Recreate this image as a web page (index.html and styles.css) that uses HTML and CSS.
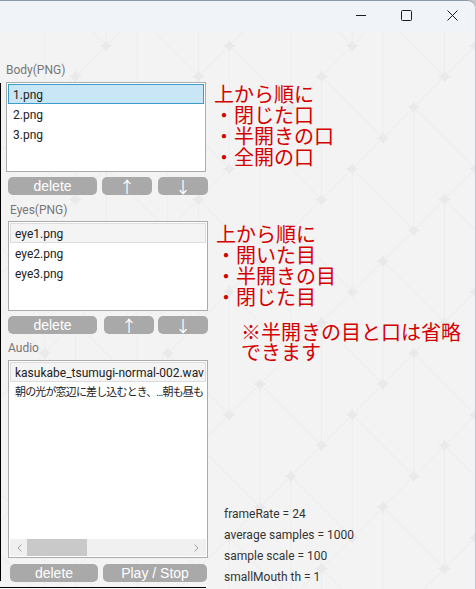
FILE: index.html
```html
<!DOCTYPE html>
<html lang="ja">
<head>
<meta charset="utf-8">
<title>Lip sync tool</title>
<link rel="stylesheet" href="styles.css">
</head>
<body>
<div class="window">
  <svg class="wallpaper" width="476" height="589" aria-hidden="true">
    <defs>
      <path id="star" d="M0-6.500Q1.500-1.500 6.500 0 1.500 1.500 0 6.500-1.500 1.500-6.500 0-1.500-1.500 0-6.500z"/>
      <g id="motif">
        <path class="vert" d="M0 0V123"/>
        <path class="diag" d="M0 0L61.500 61.500"/>
        <use href="#star"/>
        <use href="#star" x="61.500" y="61.500"/>
      </g>
      <g id="row">
        <path class="diag" d="M-800 800L800-800"/>
        <use href="#motif" x="-615" y="615"/>
        <use href="#motif" x="-553.500" y="553.500"/>
        <use href="#motif" x="-492" y="492"/>
        <use href="#motif" x="-430.500" y="430.500"/>
        <use href="#motif" x="-369" y="369"/>
        <use href="#motif" x="-307.500" y="307.500"/>
        <use href="#motif" x="-246" y="246"/>
        <use href="#motif" x="-184.500" y="184.500"/>
        <use href="#motif" x="-123" y="123"/>
        <use href="#motif" x="-61.500" y="61.500"/>
        <use href="#motif"/>
        <use href="#motif" x="61.500" y="-61.500"/>
        <use href="#motif" x="123" y="-123"/>
        <use href="#motif" x="184.500" y="-184.500"/>
        <use href="#motif" x="246" y="-246"/>
        <use href="#motif" x="307.500" y="-307.500"/>
        <use href="#motif" x="369" y="-369"/>
        <use href="#motif" x="430.500" y="-430.500"/>
        <use href="#motif" x="492" y="-492"/>
        <use href="#motif" x="553.500" y="-553.500"/>
        <use href="#motif" x="615" y="-615"/>
      </g>
    </defs>
    <g class="lattice" transform="translate(260 384)">
      <use href="#row" x="-553.500" y="-184.500"/>
      <use href="#row" x="-461.250" y="-153.750"/>
      <use href="#row" x="-369" y="-123"/>
      <use href="#row" x="-276.750" y="-92.250"/>
      <use href="#row" x="-184.500" y="-61.500"/>
      <use href="#row" x="-92.250" y="-30.750"/>
      <use href="#row"/>
      <use href="#row" x="92.250" y="30.750"/>
      <use href="#row" x="184.500" y="61.500"/>
      <use href="#row" x="276.750" y="92.250"/>
      <use href="#row" x="369" y="123"/>
    </g>
  </svg>

  <header class="titlebar">
    <svg class="winbtn winbtn-min" width="46" height="31" viewBox="0 0 46 31"><path d="M18 14.500H28"/></svg>
    <svg class="winbtn" width="46" height="31" viewBox="0 0 46 31"><rect x="18.500" y="9.500" width="10" height="10" rx="1"/></svg>
    <svg class="winbtn" width="46" height="31" viewBox="0 0 46 31"><path d="M18.500 9.500L28.500 19.500M28.500 9.500L18.500 19.500"/></svg>
  </header>

  <main class="content">
    <section class="panel">
      <h2 class="label label-body">Body(PNG)</h2>
      <ul class="list list-body">
        <li class="item selected">1.png</li>
        <li class="item">2.png</li>
        <li class="item">3.png</li>
      </ul>
      <div class="buttons buttons-body">
        <button class="btn btn-delete">delete</button>
        <button class="btn btn-move btn-up-body">↑</button>
        <button class="btn btn-move btn-down">↓</button>
      </div>

      <h2 class="label label-eyes">Eyes(PNG)</h2>
      <ul class="list list-eyes">
        <li class="item current">eye1.png</li>
        <li class="item">eye2.png</li>
        <li class="item">eye3.png</li>
      </ul>
      <div class="buttons buttons-eyes">
        <button class="btn btn-delete">delete</button>
        <button class="btn btn-move btn-up-eyes">↑</button>
        <button class="btn btn-move btn-down">↓</button>
      </div>

      <h2 class="label label-audio">Audio</h2>
      <div class="list list-audio">
        <ul class="audio-rows">
          <li class="item current">kasukabe_tsumugi-normal-002.wav</li>
          <li class="item item-cjk">朝の光が窓辺に差し込むとき、...朝も昼も</li>
        </ul>
        <div class="scrollbar">
          <svg width="8" height="10" viewBox="0 0 8 10" class="chev"><path d="M5.500 1.500L2 5l3.500 3.500"/></svg>
          <div class="track"><div class="thumb"></div></div>
          <svg width="8" height="10" viewBox="0 0 8 10" class="chev"><path d="M2.500 1.500L6 5 2.500 8.500"/></svg>
        </div>
      </div>
      <div class="buttons buttons-audio">
        <button class="btn btn-delete-audio">delete</button>
        <button class="btn btn-play">Play / Stop</button>
      </div>
    </section>

    <aside class="side">
      <p class="note note-body">上から順に<br>・閉じた口<br>・半開きの口<br>・全開の口</p>
      <p class="note note-eyes">上から順に<br>・開いた目<br>・半開きの目<br>・閉じた目</p>
      <p class="note note-hint">※半開きの目と口は省略<br>できます</p>
      <div class="params">
        <p>frameRate = 24</p>
        <p>average samples = 1000</p>
        <p>sample scale = 100</p>
        <p>smallMouth th = 1</p>
      </div>
    </aside>
  </main>
  <div class="edge-left"></div>
  <div class="edge-bottom"></div>
</div>
</body>
</html>
```

FILE: styles.css
```css
* { box-sizing: border-box; }
html, body { margin: 0; padding: 0; }
body {
  width: 476px;
  height: 589px;
  overflow: hidden;
  background: #c9c6cc;
  font-family: Roboto, "Noto Sans CJK JP", sans-serif;
}
ul { list-style: none; margin: 0; padding: 0; }
p, h2 { margin: 0; }

.window {
  position: relative;
  width: 475px;
  height: 589px;
  overflow: hidden;
  background: #f3f3f4;
  border-top: 1px solid #8c9bab;
  border-top-right-radius: 8px;
}
.wallpaper { position: absolute; left: 0; top: -1px; }
.vert { stroke: #ededee; stroke-width: 1; fill: none; }
.diag { stroke: #ebebec; stroke-width: 1; fill: none; }
.lattice { fill: #e9e9ea; }

.titlebar {
  position: relative;
  display: flex;
  justify-content: flex-end;
  height: 31px;
  background: #f0f4f9;
}
.winbtn { display: block; }
.winbtn-min { margin-right: -1px; }
.winbtn path, .winbtn rect { fill: none; stroke: #1c1c1c; stroke-width: 1; }

.content {
  position: relative;
  display: flex;
  height: 557px;
}
.panel { width: 215px; flex: none; }
.label {
  font-size: 12px;
  font-weight: 400;
  line-height: 16px;
  color: #777;
}
.label-body { margin: 30px 0 0 6px; }
.label-eyes { margin: 7px 0 0 10px; }
.label-audio { margin: 6px 0 0 8px; }

.list {
  background: #fff;
  border: 1px solid #ababab;
  padding: 1px;
  width: 200px;
  overflow: hidden;
}
.list-body { margin: 4px 0 0 6px; height: 90px; }
.list-eyes { margin: 3px 0 0 8px; height: 90px; }
.list-audio {
  margin: 4px 0 0 8px;
  height: 198px;
  display: flex;
  flex-direction: column;
}
.audio-rows { flex: 1; overflow: hidden; }

.item {
  height: 20px;
  line-height: 20px;
  padding: 0 4px;
  font-size: 12px;
  color: #222;
  border: 1px solid transparent;
  white-space: nowrap;
}
.item-cjk { font-size: 11px; letter-spacing: -0.85px; }
.selected { background: #c9e6f6; border-color: #3c9ccb; }
.current { background: #f4f4f4; border-color: #dcdcdc; }

.scrollbar {
  display: flex;
  align-items: center;
  height: 17px;
  background: #f0f0f0;
  padding: 0 6px;
}
.track { flex: 1; height: 17px; padding-left: 3px; }
.thumb { width: 60px; height: 17px; background: #c9c9c9; }
.chev { flex: none; }
.chev path { fill: none; stroke: #a0a0a0; stroke-width: 1; }

.buttons { display: flex; }
.buttons-body { margin: 5px 0 0 8px; }
.buttons-eyes { margin: 5px 0 0 8px; }
.buttons-audio { margin: 6px 0 0 10px; gap: 5px; }
.btn {
  height: 18px;
  padding: 0;
  border: 0;
  border-radius: 5px;
  background: #a9a9a9;
  color: #fff;
  font-family: "Liberation Sans", sans-serif;
  font-size: 14px;
  line-height: 18px;
}
.btn-delete { width: 89px; }
.btn-move {
  width: 50px;
  font-family: "Noto Sans CJK JP", sans-serif;
  font-size: 16px;
}
.btn-up-body { margin-left: 5px; }
.btn-up-eyes { margin-left: 7px; }
.btn-up-body + .btn-down { margin-left: 6px; }
.btn-up-eyes + .btn-down { margin-left: 4px; }
.btn-delete-audio { width: 88px; }
.btn-play { width: 104px; }

.side { flex: 1; min-width: 0; }
.note {
  color: #d40000;
  font-family: "Noto Sans CJK JP", sans-serif;
  font-size: 20px;
  line-height: 21px;
  white-space: nowrap;
}
.note-body { margin: 51px 0 0 -1px; }
.note-eyes { margin: 56px 0 0 1px; }
.note-hint { margin: 15px 0 0 26px; line-height: 20px; }
.params {
  margin: 142px 0 0 9px;
  font-size: 12px;
  line-height: 21px;
  color: #333;
}

.edge-left {
  position: absolute;
  left: 0;
  top: 82px;
  width: 1px;
  height: 498px;
  background: #000;
}
.edge-bottom {
  position: absolute;
  left: 0;
  top: 586px;
  width: 206px;
  height: 2px;
  border-top: 1px solid #000;
  background: #fff;
}
```
